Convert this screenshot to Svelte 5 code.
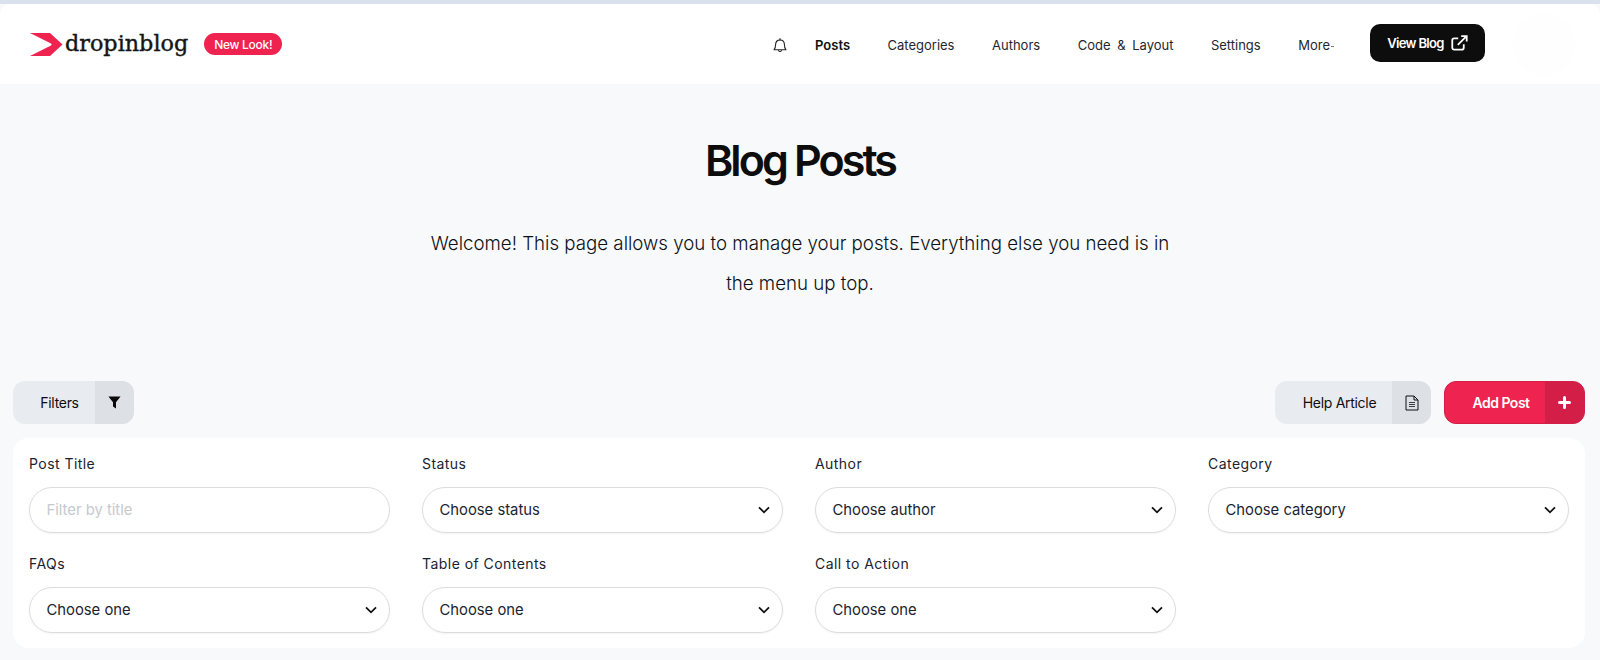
<script lang="ts">
const navItems = [
  { label: 'Posts', active: true },
  { label: 'Categories' },
  { label: 'Authors' },
  { label: 'Code & Layout', wide: true },
  { label: 'Settings' },
]

const fields = [
  { label: 'Post Title', placeholder: 'Filter by title' },
  { label: 'Status', value: 'Choose status' },
  { label: 'Author', value: 'Choose author' },
  { label: 'Category', value: 'Choose category' },
  { label: 'FAQs', value: 'Choose one' },
  { label: 'Table of Contents', value: 'Choose one' },
  { label: 'Call to Action', value: 'Choose one' },
]
</script>

<div class="page">
  <header class="topbar">
    <div class="brand">
      <svg class="logo-mark" width="33" height="23" viewBox="0 0 33 23" aria-hidden="true">
        <path d="M0 0H20L32.500 11.500 20 23H0L21 12.500Q22.500 11.500 21 10.500Z" fill="#ee2350" />
      </svg>
      <span class="wordmark">dropinblog</span>
      <span class="badge">New Look!</span>
    </div>

    <nav class="nav">
      <svg class="bell" width="14" height="15" viewBox="0 0 14 15" fill="none" stroke="#222" stroke-width="1.1" aria-hidden="true">
        <path d="M1 11.8C2.3 10.6 2.6 9.2 2.6 6.6 2.6 3.9 4.4 2 7 2s4.4 1.9 4.4 4.6c0 2.6.3 4 1.6 5.2Z" stroke-linejoin="round" />
        <path d="M7 .6V2M5.6 12.6a1.5 1.5 0 0 0 2.8 0" stroke-linecap="round" />
      </svg>
      {#each navItems as item}
        <span class="nav-item" class:active={item.active} class:wide={item.wide}>{item.label}</span>
      {/each}
      <span class="nav-item more">More<i class="caret"></i></span>
      <button class="view-blog">
        View Blog
        <svg width="17" height="16" viewBox="0 0 16 15" fill="none" stroke="#fff" stroke-width="1.7" aria-hidden="true">
          <path d="M12 8.6V12a1.8 1.8 0 0 1-1.8 1.8H3A1.8 1.8 0 0 1 1.2 12V5A1.8 1.8 0 0 1 3 3.2h3.8" />
          <path d="M6.4 9.2 14.400 1.200M9.600 1h5.200v5.200" />
        </svg>
      </button>
      <div class="avatar"></div>
    </nav>
  </header>

  <section class="hero">
    <h1>Blog Posts</h1>
    <p>Welcome! This page allows you to manage your posts. Everything else you need is in the menu up top.</p>
  </section>

  <div class="toolbar">
    <button class="action">
      <span class="action-label filters">Filters</span>
      <span class="action-icon filters-icon">
        <svg width="13" height="13" viewBox="0 0 13 13" aria-hidden="true">
          <path d="M.4.6h12.200L8 6.200V12.600L5 10.600V6.200Z" fill="#0a0a0a" />
        </svg>
      </span>
    </button>
    <div class="toolbar-right">
      <button class="action">
        <span class="action-label help">Help Article</span>
        <span class="action-icon help-icon">
          <svg width="14" height="16" viewBox="0 0 14 16" fill="none" stroke="#111" aria-hidden="true">
            <path d="M1 1h8l4 4v10H1Z" stroke-width="1" stroke-linejoin="round" />
            <path d="M9 1v4h4" stroke-width="1" />
            <path d="M4 7.500h6M4 9.500h6M4 11.500h6" stroke-width=".8" />
          </svg>
        </span>
      </button>
      <button class="action primary">
        <span class="action-label add">Add Post</span>
        <span class="action-icon add-icon">
          <svg width="13" height="13" viewBox="0 0 13 13" aria-hidden="true">
            <path d="M6.500 1.500v10M1.500 6.500h10" stroke="#fff" stroke-width="3" stroke-linecap="round" />
          </svg>
        </span>
      </button>
    </div>
  </div>

  <section class="panel">
    {#each fields as field}
      <div class="field">
        <span class="field-label">{field.label}</span>
        {#if field.placeholder}
          <div class="control placeholder">{field.placeholder}</div>
        {:else}
          <div class="control">
            {field.value}
            <svg width="12" height="8" viewBox="0 0 12 8" fill="none" stroke="#111" stroke-width="1.800" aria-hidden="true">
              <path d="M1 1.300 6 6.300 11 1.300" />
            </svg>
          </div>
        {/if}
      </div>
    {/each}
  </section>
</div>

<style>
  :global(body) {
    margin: 0;
    background: #f8f9fb;
  }

  .page {
    height: 660px;
    overflow: hidden;
    background: #f8f9fb;
    border-top: 4px solid #d9e2ec;
    box-sizing: border-box;
    font-family: Inter, "Liberation Sans", sans-serif;
    color: #0d0d0d;
  }

  button {
    font-family: inherit;
    border: none;
    padding: 0;
  }

  .topbar {
    height: 80px;
    background: #fff;
    border-radius: 10px 10px 0 0;
    display: flex;
    align-items: center;
    justify-content: space-between;
    padding: 0 25px 0 30px;
  }

  .brand {
    display: flex;
    align-items: center;
  }

  .logo-mark {
    margin-right: 2px;
  }

  .wordmark {
    font-family: "DejaVu Serif", serif;
    font-size: 22.300px;
    font-weight: 400;
    -webkit-text-stroke: 0.4px #151515;
    color: #151515;
    line-height: 1;
    transform: translateY(-1px);
  }

  .badge {
    margin-left: 16px;
    width: 78px;
    height: 22px;
    border-radius: 11px;
    background: #ee2350;
    color: #fff;
    font-size: 12px;
    font-weight: 500;
    letter-spacing: -0.3px;
    display: flex;
    align-items: center;
    justify-content: center;
  }

  .nav {
    display: flex;
    align-items: center;
    gap: 37.500px;
    padding-top: 2px;
  }

  .bell {
    margin-right: -9.500px;
  }

  .nav-item {
    font-size: 13px;
    color: #1f2630;
  }

  .nav-item.active {
    font-weight: 600;
    color: #111;
  }

  .nav-item.wide {
    word-spacing: 3px;
  }

  .more {
    display: flex;
    align-items: center;
  }

  .caret {
    width: 3px;
    height: 1px;
    margin: 2px 0 0 1px;
    background: #777;
  }

  .view-blog {
    width: 115px;
    height: 38px;
    margin-top: -4px;
    margin-left: -1.500px;
    border-radius: 10px;
    background: #0d0d0d;
    color: #fff;
    font-size: 13px;
    font-weight: 600;
    letter-spacing: -0.7px;
    display: flex;
    align-items: center;
    justify-content: center;
    gap: 7px;
  }

  .avatar {
    width: 62px;
    height: 62px;
    margin-left: -9.500px;
    border-radius: 50%;
    background: #fefefe;
  }

  .hero {
    text-align: center;
  }

  h1 {
    margin: 0;
    padding-top: 49px;
    font-size: 43px;
    line-height: 54px;
    font-weight: 600;
    letter-spacing: -2.900px;
    color: #0d0d0d;
  }

  .hero p {
    width: 750px;
    margin: 37px auto 0;
    font-size: 18.700px;
    line-height: 40px;
    font-weight: 300;
    color: #0d1117;
  }

  .toolbar {
    display: flex;
    justify-content: space-between;
    margin: 77px 15px 0 13px;
  }

  .toolbar-right {
    display: flex;
    gap: 13px;
  }

  .action {
    height: 43px;
    display: flex;
    overflow: hidden;
    border-radius: 12px;
    background: #e8ebf0;
    color: #0d0d0d;
    font-size: 14px;
    letter-spacing: -0.3px;
  }

  .action-label {
    display: flex;
    align-items: center;
    justify-content: center;
    height: 100%;
    box-sizing: border-box;
  }

  .filters { width: 82px; padding-left: 11px; }
  .help { width: 117px; padding-left: 12px; }
  .add { width: 100px; padding-left: 12px; font-weight: 600; letter-spacing: -0.5px; }

  .action-icon {
    height: 100%;
    display: flex;
    align-items: center;
    justify-content: center;
    background: #dde0e5;
  }

  .filters-icon { width: 39px; }
  .help-icon { width: 39px; }
  .add-icon { width: 39px; background: #d31f47; }

  .primary {
    background: #ee2350;
    color: #fff;
    border: 1px solid #d31f47;
    box-sizing: border-box;
  }

  .panel {
    margin: 14px 15px 0 13px;
    padding: 17px 16px 15px 16px;
    background: #fff;
    border-radius: 16px;
    display: grid;
    grid-template-columns: repeat(4, 1fr);
    column-gap: 32px;
    row-gap: 22px;
  }

  .field {
    display: flex;
    flex-direction: column;
    gap: 14px;
  }

  .field-label {
    font-size: 14px;
    line-height: 18px;
    letter-spacing: 0.45px;
    color: #1a2330;
  }

  .control {
    height: 46px;
    box-sizing: border-box;
    border: 1px solid #dcdcdc;
    border-radius: 23px;
    padding: 0 12px 0 16.500px;
    display: flex;
    align-items: center;
    justify-content: space-between;
    font-size: 14.800px;
    color: #1a2330;
    box-shadow: 0 1px 2px rgba(0, 0, 0, 0.05);
  }

  .placeholder {
    color: #c6c9ce;
  }
</style>
